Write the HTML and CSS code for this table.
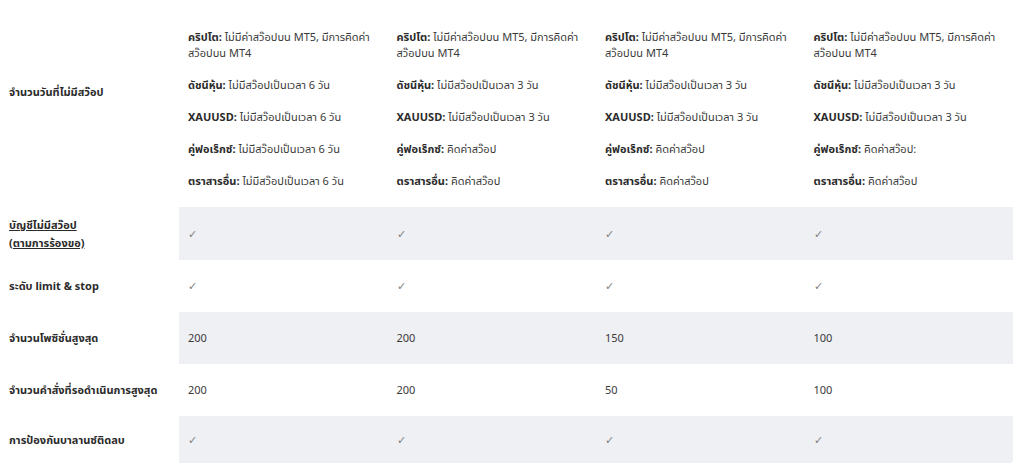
FILE: index.html
```html
<!DOCTYPE html>
<html lang="th">
<head>
<meta charset="utf-8">
<title>ตารางเปรียบเทียบบัญชี</title>
<link rel="stylesheet" href="styles.css">
</head>
<body>
<table class="compare">
  <colgroup>
    <col class="col-label">
    <col class="col-data">
    <col class="col-data">
    <col class="col-data">
    <col class="col-data">
  </colgroup>
  <tbody>
    <tr class="row-swap">
      <th class="label label-swap">จำนวนวันที่ไม่มีสว๊อป</th>
      <td>
        <p><b>คริปโต:</b> ไม่มีค่าสว๊อปบน MT5, มีการคิดค่าสว๊อปบน MT4</p>
        <p><b>ดัชนีหุ้น:</b> ไม่มีสว๊อปเป็นเวลา 6 วัน</p>
        <p><b>XAUUSD:</b> ไม่มีสว๊อปเป็นเวลา 6 วัน</p>
        <p><b>คู่ฟอเร็กซ์:</b> ไม่มีสว๊อปเป็นเวลา 6 วัน</p>
        <p><b>ตราสารอื่น:</b> ไม่มีสว๊อปเป็นเวลา 6 วัน</p>
      </td>
      <td>
        <p><b>คริปโต:</b> ไม่มีค่าสว๊อปบน MT5, มีการคิดค่าสว๊อปบน MT4</p>
        <p><b>ดัชนีหุ้น:</b> ไม่มีสว๊อปเป็นเวลา 3 วัน</p>
        <p><b>XAUUSD:</b> ไม่มีสว๊อปเป็นเวลา 3 วัน</p>
        <p><b>คู่ฟอเร็กซ์:</b> คิดค่าสว๊อป</p>
        <p><b>ตราสารอื่น:</b> คิดค่าสว๊อป</p>
      </td>
      <td>
        <p><b>คริปโต:</b> ไม่มีค่าสว๊อปบน MT5, มีการคิดค่าสว๊อปบน MT4</p>
        <p><b>ดัชนีหุ้น:</b> ไม่มีสว๊อปเป็นเวลา 3 วัน</p>
        <p><b>XAUUSD:</b> ไม่มีสว๊อปเป็นเวลา 3 วัน</p>
        <p><b>คู่ฟอเร็กซ์:</b> คิดค่าสว๊อป</p>
        <p><b>ตราสารอื่น:</b> คิดค่าสว๊อป</p>
      </td>
      <td>
        <p><b>คริปโต:</b> ไม่มีค่าสว๊อปบน MT5, มีการคิดค่าสว๊อปบน MT4</p>
        <p><b>ดัชนีหุ้น:</b> ไม่มีสว๊อปเป็นเวลา 3 วัน</p>
        <p><b>XAUUSD:</b> ไม่มีสว๊อปเป็นเวลา 3 วัน</p>
        <p><b>คู่ฟอเร็กซ์:</b> คิดค่าสว๊อป:</p>
        <p><b>ตราสารอื่น:</b> คิดค่าสว๊อป</p>
      </td>
    </tr>
    <tr class="row-shaded row-tall">
      <th class="label"><a href="#" class="label-link">บัญชีไม่มีสว๊อป<br>(ตามการร้องขอ)</a></th>
      <td class="check">✓</td>
      <td class="check">✓</td>
      <td class="check">✓</td>
      <td class="check">✓</td>
    </tr>
    <tr class="row-plain">
      <th class="label">ระดับ limit &amp; stop</th>
      <td class="check">✓</td>
      <td class="check">✓</td>
      <td class="check">✓</td>
      <td class="check">✓</td>
    </tr>
    <tr class="row-shaded">
      <th class="label">จำนวนโพซิชั่นสูงสุด</th>
      <td>200</td>
      <td>200</td>
      <td>150</td>
      <td>100</td>
    </tr>
    <tr class="row-plain">
      <th class="label">จำนวนคำสั่งที่รอดำเนินการสูงสุด</th>
      <td>200</td>
      <td>200</td>
      <td>50</td>
      <td>100</td>
    </tr>
    <tr class="row-shaded row-last">
      <th class="label">การป้องกันบาลานซ์ติดลบ</th>
      <td class="check">✓</td>
      <td class="check">✓</td>
      <td class="check">✓</td>
      <td class="check">✓</td>
    </tr>
  </tbody>
</table>
</body>
</html>
```

FILE: styles.css
```css
html, body {
  margin: 0;
  padding: 0;
  background: #ffffff;
}

body {
  font-family: "Noto Sans", "Noto Sans Thai", "Open Sans", sans-serif;
  font-size: 11px;
  line-height: 16px;
  color: #3a3a3a;
}

.compare {
  width: 1013px;
  border-collapse: collapse;
  table-layout: fixed;
}

.col-label {
  width: 179px;
}

.col-data {
  width: 208.5px;
}

.compare th,
.compare td {
  padding: 0 9px;
  text-align: left;
  vertical-align: middle;
}

.label {
  font-weight: 700;
  color: #2b2b2b;
  padding-left: 8px;
}

.row-swap td {
  vertical-align: top;
  padding-top: 29px;
  padding-bottom: 18px;
}

.row-swap .label-swap {
  padding-bottom: 23px;
}

.row-swap p {
  margin: 0 0 16px;
}

.row-swap p:last-child {
  margin-bottom: 0;
}

.row-swap b {
  font-weight: 700;
  color: #2b2b2b;
}

.row-shaded,
.row-plain {
  height: 52px;
}

.row-tall {
  height: 53px;
}

.row-shaded td {
  background: #eff0f4;
}

.row-last {
  height: 47px;
}

.row-last td:last-child {
  border-bottom-right-radius: 4px;
}

.label-link {
  color: #2b2b2b;
  text-decoration: underline;
  line-height: 18px;
}

.check {
  color: #808080;
  font-size: 11px;
}
```
